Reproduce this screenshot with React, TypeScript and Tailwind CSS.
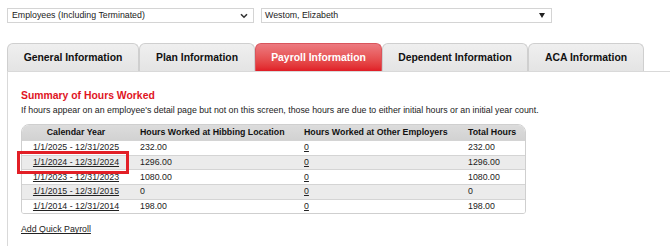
import React from 'react';

const tabs = [
  { label: 'General Information', w: 'w-[132px]' },
  { label: 'Plan Information', w: 'w-[116px]' },
  { label: 'Payroll Information', w: 'w-[127px]', active: true },
  { label: 'Dependent Information', w: 'w-[146px]' },
  { label: 'ACA Information', w: 'w-[116px]' },
];

const rows = [
  { year: '1/1/2025 - 12/31/2025', hib: '232.00', other: '0', total: '232.00', link: false },
  { year: '1/1/2024 - 12/31/2024', hib: '1296.00', other: '0', total: '1296.00', link: true },
  { year: '1/1/2023 - 12/31/2023', hib: '1080.00', other: '0', total: '1080.00', link: true },
  { year: '1/1/2015 - 12/31/2015', hib: '0', other: '0', total: '0', link: true },
  { year: '1/1/2014 - 12/31/2014', hib: '198.00', other: '0', total: '198.00', link: true },
];

const cols = 'grid grid-cols-[108px_164px_164px_1fr]';

export default function App() {
  return (
    <div className="relative w-[670px] h-[246px] overflow-hidden bg-white text-[#222] font-['Liberation_Sans',Arial,sans-serif]">
      {/* dropdowns */}
      <div className="flex gap-[7px] pl-[7px] pt-[8px]">
        <div className="flex items-center justify-between w-[247px] h-[15px] border border-[#d4d4d4] bg-white pl-[4px] pr-[4px] text-[8.8px]">
          <span>Employees (Including Terminated)</span>
          <svg width="8" height="6" viewBox="0 0 8 6" className="mr-[1px]">
            <path d="M1 1.2 L4 4.2 L7 1.2" fill="none" stroke="#333" strokeWidth="1.6" />
          </svg>
        </div>
        <div className="flex items-center justify-between w-[291px] h-[15px] border border-[#d4d4d4] bg-white pl-[3px] pr-[6px] text-[8.8px]">
          <span>Westom, Elizabeth</span>
          <svg width="6" height="5" viewBox="0 0 6 5">
            <path d="M0 0 H6 L3 5 Z" fill="#222" />
          </svg>
        </div>
      </div>

      {/* tabs */}
      <div className="flex pl-[7px] mt-[20px]">
        {tabs.map((t) => (
          <div
            key={t.label}
            className={
              t.active
                ? `${t.w} h-[28px] flex items-center justify-center rounded-t-[6px] border border-b-0 border-[#d9555c] bg-gradient-to-b from-[#ec7a80] to-[#e01b25] text-white font-bold text-[10.4px]`
                : `${t.w} h-[28px] flex items-center justify-center rounded-t-[6px] border border-b-0 border-[#cfcfcf] bg-gradient-to-b from-[#efefef] to-[#e4e4e4] text-[#111] font-bold text-[10.4px]`
            }
          >
            {t.label}
          </div>
        ))}
      </div>

      {/* panel */}
      <div className="ml-[7px] h-[200px] border-l border-t border-[#d9d9d9] pl-[13px] pt-[18px]">
        <div className="text-[10.4px] leading-[12px] font-bold text-[#e0141e]">Summary of Hours Worked</div>
        <div className="mt-[3px] text-[8.8px] leading-[11px]">
          If hours appear on an employee's detail page but not on this screen, those hours are due to either initial hours or an initial year count.
        </div>

        <div className="mt-[8px] w-[505px] border border-[#cfcfcf] rounded-t-[8px] rounded-b-[3px] overflow-hidden text-[8.8px]">
          <div className={`${cols} h-[15px] items-center bg-gradient-to-b from-[#dcdcdc] to-[#d2d2d2] font-bold text-[#111]`}>
            <div className="text-center">Calendar Year</div>
            <div className="pl-[10px]">Hours Worked at Hibbing Location</div>
            <div className="pl-[10px]">Hours Worked at Other Employers</div>
            <div className="pl-[10px]">Total Hours</div>
          </div>
          {rows.map((r, i) => (
            <div
              key={r.year}
              className={`${cols} h-[14.7px] items-center border-t border-[#d4d4d4] ${i % 2 === 1 ? 'bg-[#ebebeb]' : 'bg-white'}`}
            >
              <div className="text-center underline">{r.year}</div>
              <div className="pl-[10px]">{r.hib}</div>
              <div className="pl-[10px] underline">{r.other}</div>
              <div className="pl-[10px]">{r.total}</div>
            </div>
          ))}
        </div>

        <div className="mt-[10px] text-[8.8px] leading-[11px] underline">Add Quick Payroll</div>
      </div>

      {/* annotation highlight */}
      <div className="absolute left-[17px] top-[151px] w-[112px] h-[23px] border-[3px] border-[#e21f26]" />
    </div>
  );
}
